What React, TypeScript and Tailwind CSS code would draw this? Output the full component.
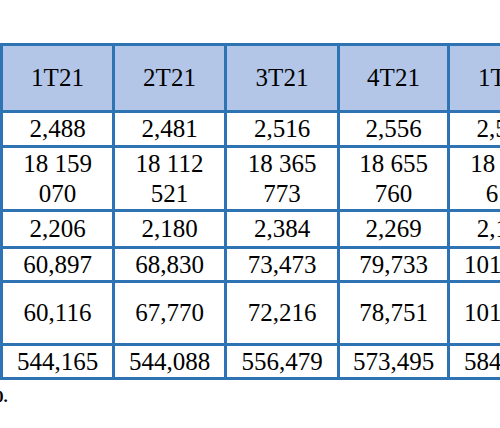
const headers = ["1T21", "2T21", "3T21", "4T21", "1T22"];

const rows: { h: string; cells: string[][] }[] = [
  { h: "h-[32px]", cells: [["2,488"], ["2,481"], ["2,516"], ["2,556"], ["2,583"]] },
  {
    h: "h-[61px]",
    cells: [
      ["18 159", "070"],
      ["18 112", "521"],
      ["18 365", "773"],
      ["18 655", "760"],
      ["18 702", "614"],
    ],
  },
  { h: "h-[34px]", cells: [["2,206"], ["2,180"], ["2,384"], ["2,269"], ["2,112"]] },
  { h: "h-[31px]", cells: [["60,897"], ["68,830"], ["73,473"], ["79,733"], ["101,245"]] },
  { h: "h-[60px]", cells: [["60,116"], ["67,770"], ["72,216"], ["78,751"], ["101,318"]] },
  { h: "h-[31px]", cells: [["544,165"], ["544,088"], ["556,479"], ["573,495"], ["584,120"]] },
];

export default function App() {
  return (
    <div className="w-[500px] h-[428px] overflow-hidden bg-white pt-[43px] font-['Liberation_Serif',serif] text-black">
      <div className="grid w-max grid-cols-[109px_109px_110px_107px_109px] gap-[3px] bg-[#2E74B5] p-[3px] pr-0">
        {headers.map((t) => (
          <div
            key={t}
            className="h-[64px] bg-[#B4C6E7] flex items-center justify-center text-[25px] leading-[30px]"
          >
            {t}
          </div>
        ))}
        {rows.map((r, i) =>
          r.cells.map((c, j) => (
            <div
              key={i + "-" + j}
              className={`${r.h} bg-white flex flex-col items-center justify-center text-[25px] leading-[30px] whitespace-nowrap`}
            >
              {c.map((l) => (
                <span key={l}>{l}</span>
              ))}
            </div>
          ))
        )}
      </div>
      <p className="-ml-[5px] mt-[8px] text-[17px] leading-[17px] font-bold">0.</p>
    </div>
  );
}
